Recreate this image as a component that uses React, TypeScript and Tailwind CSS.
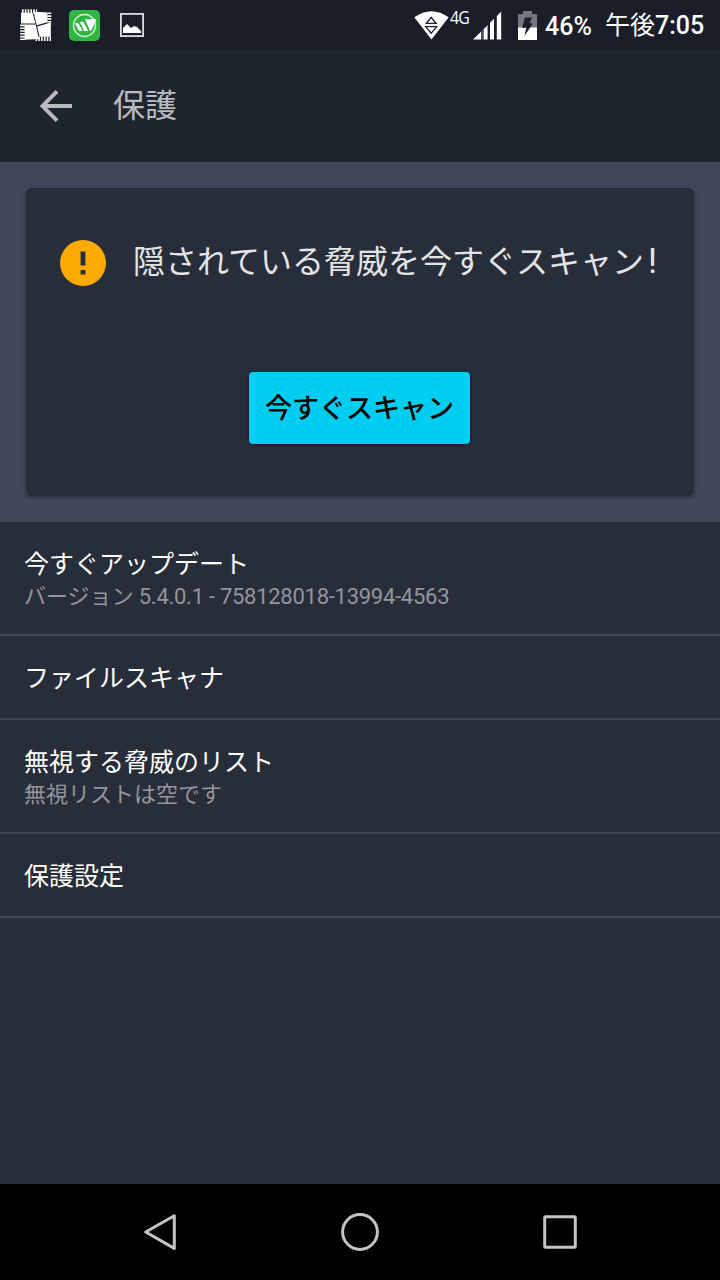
import React from 'react';

interface Opcion {
  titulo: string;
  detalle?: string;
  version?: string;
}

const opciones: Opcion[] = [
  { titulo: '今すぐアップデート', detalle: 'バージョン', version: '5.4.0.1 - 758128018-13994-4563' },
  { titulo: 'ファイルスキャナ' },
  { titulo: '無視する脅威のリスト', detalle: '無視リストは空です' },
  { titulo: '保護設定' },
];

const AvgIcon = () => (
  <svg width="33" height="32" viewBox="0 0 33 32">
    <g fill="#fff">
      <path d="M1 3.8h11.6l2.8 10.7H1z" />
      <path d="M13.4 2.5l14.1 1v9.8l-10.8 3z" />
      <path d="M4.5 15.6h11.2l3.2 14.4-14.4.8z" />
      <path d="M17.2 17.4l13.6-3.8v14.2H19.6z" />
    </g>
    <g fill="none" stroke="#fff" strokeDasharray="1.6 1.2">
      <path d="M2 2.2h15" strokeWidth="4" />
      <path d="M29.3 3.5v12" strokeWidth="4" />
      <path d="M2.5 15.6V31" strokeWidth="4.6" />
      <path d="M15.5 29.8H31" strokeWidth="4.4" />
    </g>
  </svg>
);

const WIcon = () => (
  <svg width="31" height="31" viewBox="0 0 31 31">
    <rect width="31" height="31" rx="5" fill="#2fb642" />
    <circle cx="15.5" cy="15.5" r="11" fill="none" stroke="#c9efcd" strokeWidth="1.4" />
    <path d="M16 9.2h11.4l-4.7 10.6c-.6 1-1.4 1-2 .2z" fill="#fff" />
    <path d="M11 12.2c1.5-1 3-.8 3.8.5l4.6 8.3h-3.2c-.8 0-1.2-.3-1.5-1zM6 13.6c1.5-1 3-.8 3.8.5l3.8 6.9h-2.6c-.8 0-1.2-.3-1.5-1z" fill="#fff" />
  </svg>
);

const PictureIcon = () => (
  <svg width="24" height="24" viewBox="0 0 24 24">
    <rect x=".9" y=".9" width="22.2" height="22.2" fill="none" stroke="#d9dcdd" strokeWidth="1.8" />
    <path d="M3 20v-5l4-4 4 4 3-2 3 1 4 4v2z" fill="#fff" />
  </svg>
);

const WifiIcon = () => (
  <svg width="35" height="29" viewBox="0 0 35 29">
    <path d="M.3 6.3Q17.5-6 34.7 6.3L17.5 28.5z" fill="#fff" />
    <path d="M12.4 12.4l4.8-6 4.8 6z" fill="none" stroke="#1a1f2a" strokeWidth="1.4" />
    <path d="M11.6 15.6h11.2l-5.6 6.6z" fill="none" stroke="#1a1f2a" strokeWidth="1.2" />
  </svg>
);

const SignalIcon = () => (
  <svg width="29" height="29" viewBox="0 0 29 29">
    <path d="M0 28.5l8-7.8v7.8zM10.6 18.2l4-4v14.3h-4zM17 11.8l4-4v20.7h-4zM23.8 5l4.4-4.6v28.1h-4.4z" fill="#fff" />
    <path d="M8 20.7l1.7-1.6v9.4H8z" fill="#555a63" />
  </svg>
);

const BatteryIcon = () => (
  <svg width="19" height="29" viewBox="0 0 19 29">
    <path d="M0 3h5V0h9v3h5v14H0z" fill="#75787f" />
    <path d="M0 16.5h19V29H0z" fill="#fff" />
    <path d="M7 6.5h7l-2.5 5.8H15L6.5 25l1.8-8.2H4.2z" fill="#1a1f2a" />
  </svg>
);

const StatusBar = () => (
  <div className="flex h-[50px] items-center bg-[#1a1e28] pl-5 pr-4 text-[25px] font-medium leading-none text-white">
    <AvgIcon />
    <div className="ml-4">
      <WIcon />
    </div>
    <div className="ml-5">
      <PictureIcon />
    </div>
    <div className="ml-auto flex items-center">
      <WifiIcon />
      <span className="mb-4 ml-[1px] w-[23px] origin-left scale-x-[0.88] font-['Open_Sans'] text-[18px] font-medium tracking-[-1px]">4G</span>
      <SignalIcon />
      <div className="ml-4">
        <BatteryIcon />
      </div>
      <span className="ml-2 mt-[2px] w-[52px]">46%</span>
      <span className="ml-2 mt-[1px] w-[99px] whitespace-nowrap">
        <span className="font-normal">午後</span>7:05
      </span>
    </div>
  </div>
);

const Header = () => (
  <header className="flex h-28 items-center bg-[#1f252f] pl-10 text-[#b9bbbf]">
    <svg width="32" height="32" viewBox="0 0 32 32">
      <path d="M32 16H3M17 1.4L2.6 16 17 30.6" fill="none" stroke="currentColor" strokeWidth="3.9" />
    </svg>
    <h1 className="ml-[41px] text-[32px] leading-none">保護</h1>
  </header>
);

const ScanCard = () => (
  <section className="h-[360px] bg-[#3f475a] p-[26px]">
    <div className="flex h-[308px] flex-col items-center rounded-md bg-[#282d3a] shadow-[0_1px_4px_rgba(0,0,0,0.4)]">
      <div className="mt-[52px] flex w-full items-center pl-[34px]">
        <svg width="46" height="46" viewBox="0 0 46 46">
          <circle cx="23" cy="23" r="23" fill="#ffaa00" />
          <path d="M20.6 11.4h4.8v14h-4.8zM20.6 30h4.8v4.6h-4.8z" fill="#282d3a" />
        </svg>
        <h2 className="mb-[3px] ml-[27px] whitespace-nowrap text-[32px] leading-none text-[#e3e4e6]">
          隠されている脅威を今すぐスキャン<span className="ml-1 text-[35px] leading-none">!</span>
        </h2>
      </div>
      <button className="mr-[1px] mt-[86px] h-[72px] w-[221px] rounded bg-[#00cdf0] pt-[2px] text-[27px] font-medium leading-none text-black shadow-[0_1px_4px_rgba(0,0,0,0.4)]">
        今すぐスキャン
      </button>
    </div>
  </section>
);

const NavBar = () => (
  <nav className="flex h-24 items-center justify-center gap-[160px] bg-black text-[#c4c4c4]">
    <svg width="40" height="40" viewBox="0 0 40 40" fill="none" stroke="currentColor" strokeWidth="3" strokeLinejoin="round">
      <path d="M34.3 3.8v32.6L5.7 20z" />
    </svg>
    <svg width="40" height="40" viewBox="0 0 40 40" fill="none" stroke="currentColor" strokeWidth="3">
      <circle cx="20" cy="20" r="17.4" />
    </svg>
    <svg width="40" height="40" viewBox="0 0 40 40" fill="none" stroke="currentColor" strokeWidth="3">
      <rect x="4.7" y="4.7" width="30.6" height="30.6" rx="1" />
    </svg>
  </nav>
);

const App: React.FC = () => {
  return (
    <div className="flex h-[1280px] w-[720px] flex-col overflow-hidden bg-[#282d3a] font-[Roboto,'Noto_Sans_CJK_JP',sans-serif]">
      <StatusBar />
      <Header />
      <ScanCard />
      <ul className="flex-1">
        {opciones.map((opcion) => (
          <li
            key={opcion.titulo}
            className={`flex flex-col justify-center border-b-2 border-[#414553] px-6 pt-1 ${opcion.detalle ? 'h-[114px]' : 'h-[84px]'}`}
          >
            <p className="text-[25px] leading-[34px] text-white">{opcion.titulo}</p>
            {opcion.detalle && (
              <p className="text-[22px] leading-[30px] text-[#93969c]">
                {opcion.detalle}
                {opcion.version && <span className="tracking-[-0.27px]"> {opcion.version}</span>}
              </p>
            )}
          </li>
        ))}
      </ul>
      <NavBar />
    </div>
  );
};

export default App;
